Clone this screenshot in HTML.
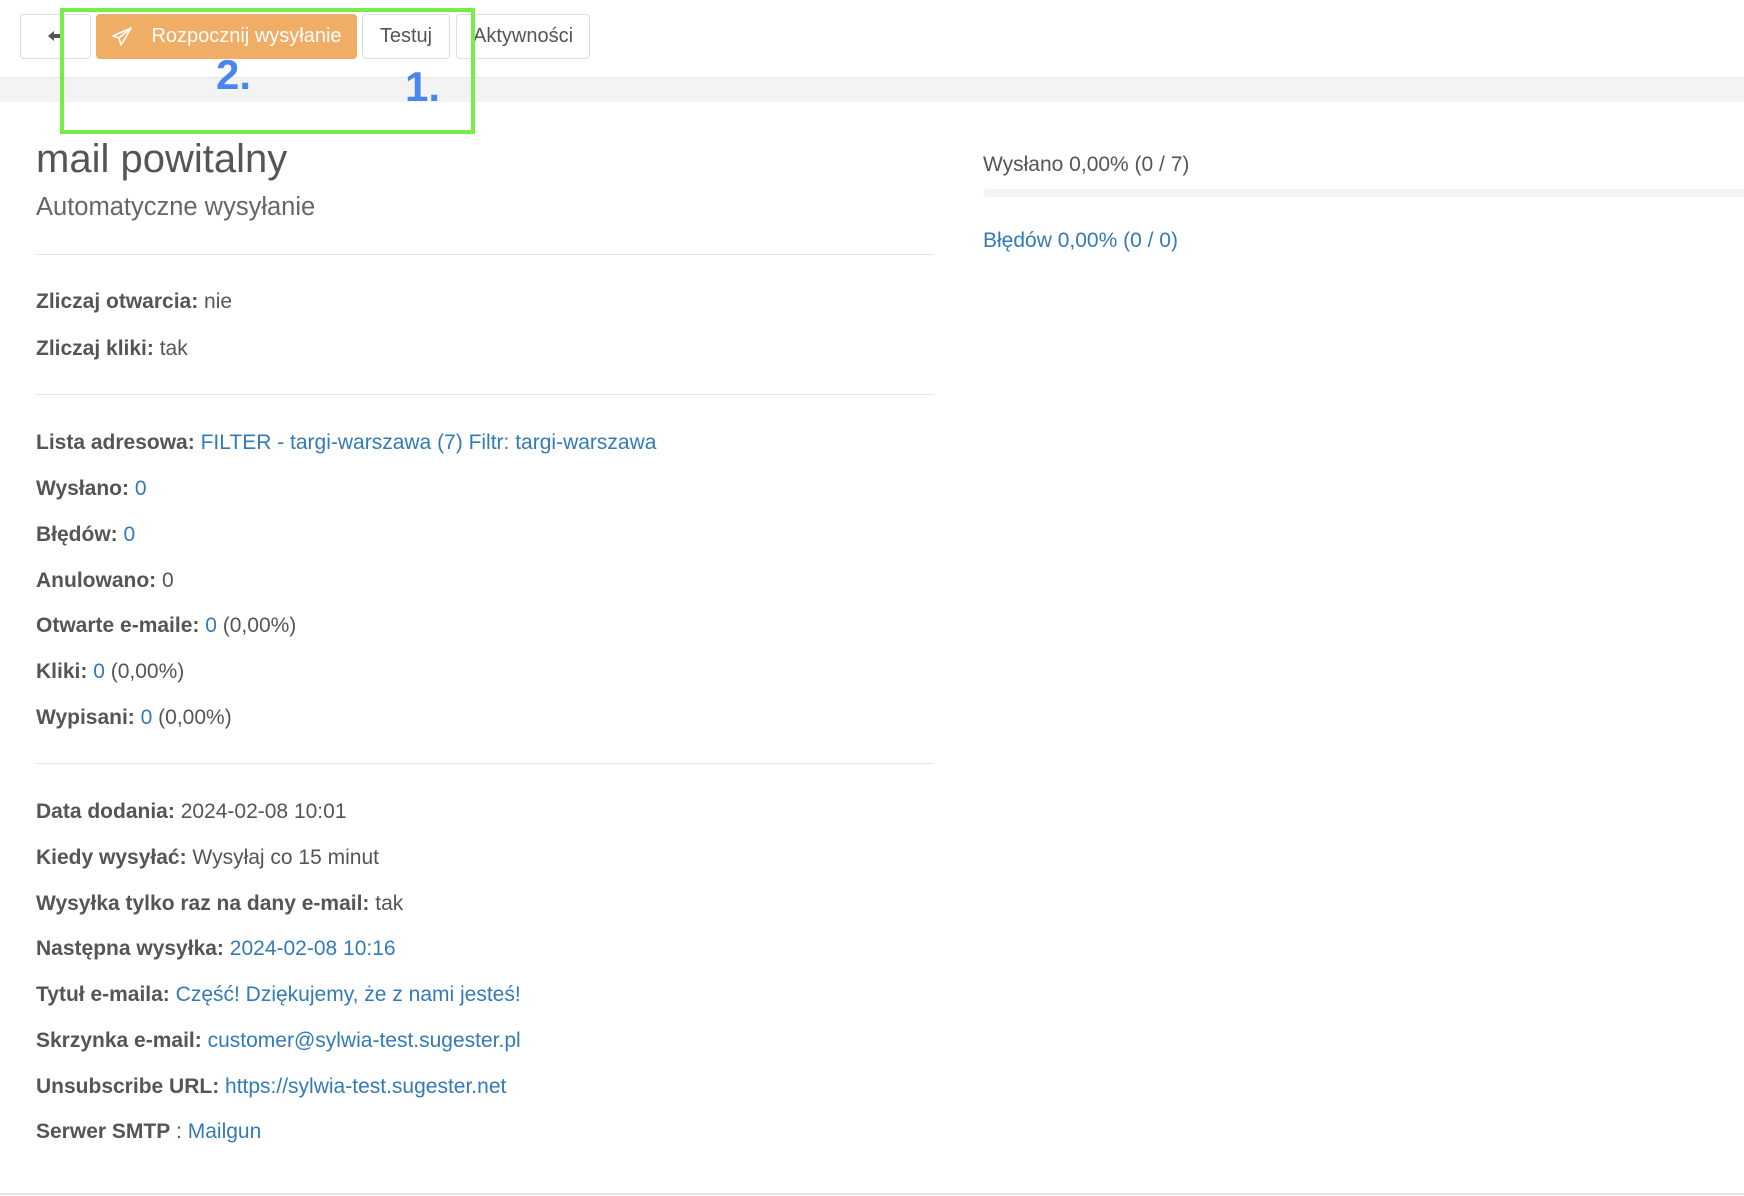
<!DOCTYPE html>
<html><head><meta charset="utf-8"><style>
*{margin:0;padding:0;box-sizing:border-box}
body{width:1744px;height:1196px;background:#fff;font-family:"Liberation Sans",sans-serif;color:#555;position:relative;overflow:hidden}
.abs{position:absolute}
.btn{position:absolute;top:14px;height:45px;border:1px solid #ddd;border-radius:4px;background:#fff;font-size:20px;color:#555;display:flex;align-items:center;justify-content:center}
.row{position:absolute;left:36px;font-size:21px;line-height:24px;white-space:nowrap}
.row b{color:#555}
a{color:#337ab7;text-decoration:none}
.hr{position:absolute;left:36px;width:898px;height:1px;background:#e6e6e6}
</style></head><body>
<div class="btn" style="left:20px;width:71px;"><svg width="18" height="14" viewBox="0 0 18 14"><path d="M7 1 L1 6 L7 11 L7 8 L14 8 L14 13 L17 13 L17 4 L7 4Z" fill="#555"/></svg></div>
<div class="btn" style="left:96px;width:261px;background:#efad65;border-color:#efad65;color:#fff"><svg width="22" height="20" viewBox="0 0 22 20" style="margin-right:18px"><path d="M20 1 L2 9 L8 11 L10 18 L13 13 Z M8 11 L20 1" fill="none" stroke="#fff" stroke-width="1.6" stroke-linejoin="round"/></svg>Rozpocznij wysyłanie</div>
<div class="btn" style="left:362px;width:88px;">Testuj</div>
<div class="btn" style="left:456px;width:134px;">Aktywności</div>
<div class="abs" style="left:0;top:77px;width:1744px;height:25px;background:#f3f3f3;border-top:1px solid #e8e8e8"></div>
<div class="abs" style="left:60px;top:8px;width:415px;height:126px;border:4px solid #76ee4a"></div>
<div class="abs" style="left:216px;top:51px;font-size:42px;font-weight:bold;color:#4a86f0">2.</div>
<div class="abs" style="left:405px;top:63px;font-size:42px;font-weight:bold;color:#4a86f0">1.</div>
<div class="abs" style="left:36px;top:137px;font-size:40px;color:#555">mail powitalny</div>
<div class="abs" style="left:36px;top:193px;font-size:25.5px;color:#666">Automatyczne wysyłanie</div>
<div class="hr" style="top:254px"></div>
<div class="row" style="top:290px"><b>Zliczaj otwarcia:</b> nie</div>
<div class="row" style="top:337px"><b>Zliczaj kliki:</b> tak</div>
<div class="hr" style="top:394px"></div>
<div class="row" style="top:431px"><b>Lista adresowa:</b> <a>FILTER - targi-warszawa (7) Filtr: targi-warszawa</a></div>
<div class="row" style="top:477px"><b>Wysłano:</b> <a>0</a></div>
<div class="row" style="top:523px"><b>Błędów:</b> <a>0</a></div>
<div class="row" style="top:569px"><b>Anulowano:</b> 0</div>
<div class="row" style="top:614px"><b>Otwarte e-maile:</b> <a>0</a> (0,00%)</div>
<div class="row" style="top:660px"><b>Kliki:</b> <a>0</a> (0,00%)</div>
<div class="row" style="top:706px"><b>Wypisani:</b> <a>0</a> (0,00%)</div>
<div class="hr" style="top:763px"></div>
<div class="row" style="top:800px"><b>Data dodania:</b> 2024-02-08 10:01</div>
<div class="row" style="top:846px"><b>Kiedy wysyłać:</b> Wysyłaj co 15 minut</div>
<div class="row" style="top:892px"><b>Wysyłka tylko raz na dany e-mail:</b> tak</div>
<div class="row" style="top:937px"><b>Następna wysyłka:</b> <a>2024-02-08 10:16</a></div>
<div class="row" style="top:983px"><b>Tytuł e-maila:</b> <a>Część! Dziękujemy, że z nami jesteś!</a></div>
<div class="row" style="top:1029px"><b>Skrzynka e-mail:</b> <a>customer@sylwia-test.sugester.pl</a></div>
<div class="row" style="top:1075px"><b>Unsubscribe URL:</b> <a>https://sylwia-test.sugester.net</a></div>
<div class="row" style="top:1120px"><b>Serwer SMTP</b> : <a>Mailgun</a></div>
<div class="abs" style="left:0;top:1193px;width:1744px;height:2px;background:#e6e6e6"></div>
<div class="row" style="left:983px;top:153px">Wysłano 0,00% (0 / 7)</div>
<div class="abs" style="left:983px;top:189px;width:761px;height:8px;background:#f3f3f3;border-radius:4px 0 0 4px"></div>
<div class="row" style="left:983px;top:229px"><a>Błędów 0,00% (0 / 0)</a></div>
</body></html>
